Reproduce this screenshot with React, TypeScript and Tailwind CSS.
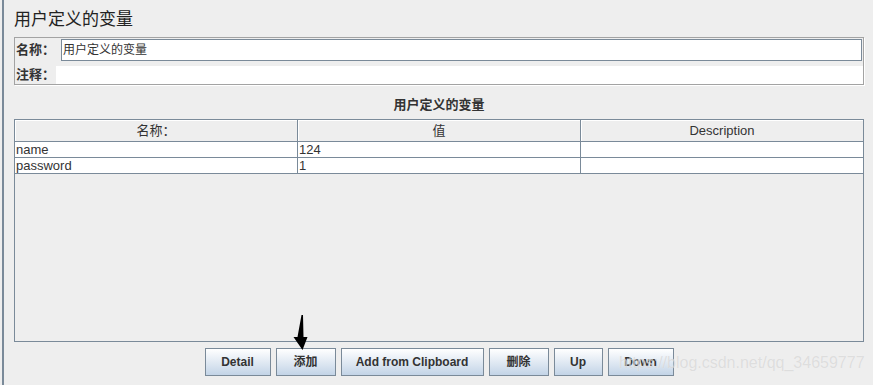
import React from "react";

const sans = "font-['Liberation_Sans','Noto_Sans_CJK_SC',sans-serif]";

const rows = [
  { name: "name", value: "124", desc: "" },
  { name: "password", value: "1", desc: "" },
];

const buttons = [
  { label: "Detail", w: "w-[66px]" },
  { label: "添加", w: "w-[60px]" },
  { label: "Add from Clipboard", w: "w-[143px]" },
  { label: "删除", w: "w-[60px]" },
  { label: "Up", w: "w-[49px]" },
  { label: "Down", w: "w-[66px]" },
];

const App: React.FC = () => {
  return (
    <div className={`relative flex w-[873px] h-[385px] overflow-hidden bg-[#eeeeee] text-[#333333] ${sans}`}>
      <div className="ml-[2px] w-[2px] h-full bg-[#7a8a99]" />
      <div className="flex flex-col pl-[10px] w-[860px]">
        <div className="h-[37px] pt-[9px] text-[17px] leading-[22px] text-[#222]">用户定义的变量</div>

        <div className="flex flex-col h-[48px] border border-[#a3a3a3] shadow-[1px_1px_0_#ffffff]">
          <div className="flex items-center h-[22px] mt-[1px] pl-[1px]">
            <span className="w-[45px] text-[13px] font-bold">名称：</span>
            <div className="flex items-center flex-1 h-[22px] mr-[1px] px-[1px] bg-white border border-[#7a8a99] text-[12px]">
              用户定义的变量
            </div>
          </div>
          <div className="flex items-center h-[18px] mt-[5px] pl-[1px]">
            <span className="w-[40px] text-[13px] font-bold">注释：</span>
            <div className="flex-1 h-[18px] bg-white" />
          </div>
        </div>

        <div className="mt-[11px] h-[18px] text-center text-[13px] leading-[18px] font-bold">用户定义的变量</div>

        <div className="mt-[5px] w-[850px] h-[223px] border border-[#7a8a99] bg-[#eeeeee]">
          <div className="grid grid-cols-[283px_283px_1fr] h-[22px] border-b border-[#7a8a99] text-[13px]">
            <div className="flex items-center justify-center border-r border-[#7a8a99] shadow-[inset_1px_1px_0_#ffffff]">名称：</div>
            <div className="flex items-center justify-center border-r border-[#7a8a99] shadow-[inset_1px_1px_0_#ffffff]">值</div>
            <div className="flex items-center justify-center shadow-[inset_1px_1px_0_#ffffff]">Description</div>
          </div>
          {rows.map((r) => (
            <div key={r.name} className="grid grid-cols-[283px_283px_1fr] h-[16px] border-b border-[#7a8a99] bg-white text-[13px] leading-[15px]">
              <div className="pl-[1px] border-r border-[#7a8a99]">{r.name}</div>
              <div className="pl-[1px] border-r border-[#7a8a99]">{r.value}</div>
              <div className="pl-[1px]">{r.desc}</div>
            </div>
          ))}
        </div>

        <div className="flex justify-center gap-[5px] mt-[6px] w-[850px]">
          {buttons.map((b) => (
            <button
              key={b.label}
              className={`${b.w} h-[28px] border border-[#7a8a99] bg-gradient-to-b from-white to-[#c3d4e7] text-[12px] font-bold text-[#333]`}
            >
              {b.label}
            </button>
          ))}
        </div>
      </div>

      <svg className="absolute left-[293px] top-[314px]" width="16" height="37" viewBox="0 0 16 37">
        <polygon points="9,1 10,1 10.5,23 14.5,23 9.5,36 0.5,23 4.5,23 8.5,1" fill="#000" />
      </svg>

      <div className="pointer-events-none absolute left-[619px] top-[353px] text-[16px] leading-[20px] text-[rgba(200,200,200,0.55)] [text-shadow:0_0_1px_rgba(255,255,255,0.6)] font-['Liberation_Sans',sans-serif]">
        https://blog.csdn.net/qq_34659777
      </div>
    </div>
  );
};

export default App;
